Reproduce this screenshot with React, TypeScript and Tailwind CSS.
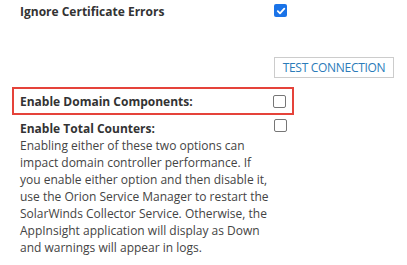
import React from "react";

function Box({ checked = false }: { checked?: boolean }) {
  if (checked) {
    return (
      <div className="w-[13px] h-[13px] rounded-[2px] bg-[#1a73e8] flex items-center justify-center">
        <svg width="10" height="10" viewBox="0 0 10 10">
          <path d="M1.8 5.2 L4 7.3 L8.3 2.6" stroke="white" strokeWidth="1.8" fill="none" strokeLinecap="round" strokeLinejoin="round" />
        </svg>
      </div>
    );
  }
  return <div className="w-[13px] h-[13px] rounded-[2px] border border-[#767676] bg-white" />;
}

export default function App() {
  return (
    <div className="w-[407px] h-[265px] bg-white overflow-hidden text-[#333]" style={{ fontFamily: "'Open Sans', sans-serif" }}>
      <div className="flex pl-[20px] pt-[2px]">
        <div className="w-[254px] font-bold text-[12px] leading-[20px]">Ignore Certificate Errors</div>
        <div className="pt-[2px]"><Box checked /></div>
      </div>
      <div className="flex justify-start pl-[274px] mt-[35px]">
        <div className="w-[120px] h-[21px] border border-[#cccccc] flex items-center justify-center text-[12px] text-[#2b7bb9] tracking-[-0.3px]">TEST CONNECTION</div>
      </div>
      <div className="ml-[12px] mt-[9px] w-[282px] h-[28px] border-2 border-[#e5433a] flex items-center pl-[6px]">
        <div className="w-[253px] font-bold text-[12px] leading-[20px] pt-[2px]">Enable Domain Components:</div>
        <Box />
      </div>
      <div className="flex pl-[20px] mt-[4px]">
        <div className="w-[254px]">
          <div className="font-bold text-[12px] leading-[17px] pt-[1px]">Enable Total Counters:</div>
          <div className="text-[12px] leading-[17px] text-[#444] w-[252px]">
            Enabling either of these two options can impact domain controller performance. If you enable either option and then disable it, use the Orion Service Manager to restart the SolarWinds Collector Service. Otherwise, the AppInsight application will display as Down and warnings will appear in logs.
          </div>
        </div>
        <div><Box /></div>
      </div>
    </div>
  );
}
